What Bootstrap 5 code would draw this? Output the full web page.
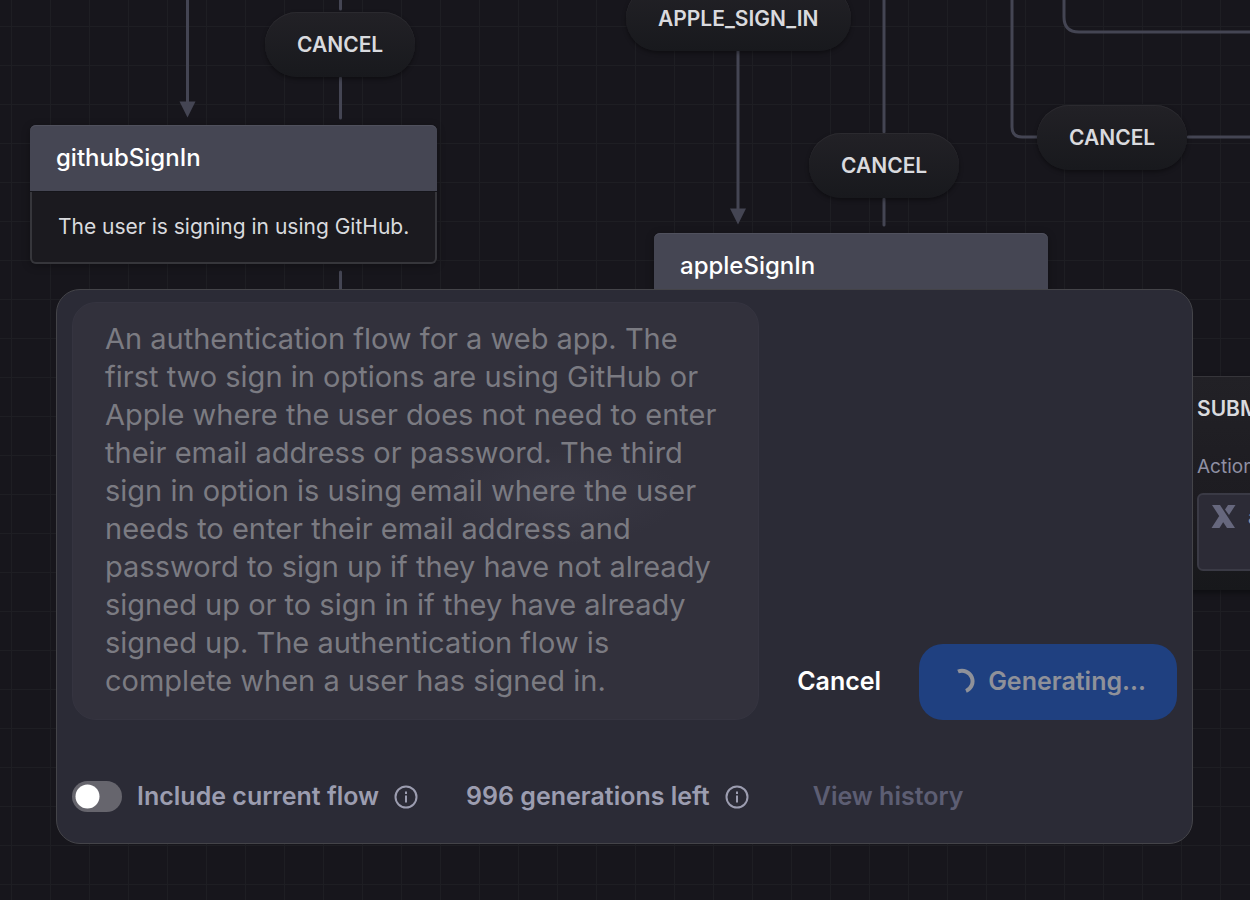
<!DOCTYPE html>
<html lang="en" data-bs-theme="dark">
<head>
<meta charset="utf-8">
<meta name="viewport" content="width=device-width, initial-scale=1">
<title>Generate flow</title>
<link href="https://cdn.jsdelivr.net/npm/bootstrap@5.3.0/dist/css/bootstrap.min.css" rel="stylesheet">
<style>
  body { font-family: Inter, "Liberation Sans", sans-serif; background: #17161c; color: #d9dade; }
  .flow-canvas {
    min-height: 100vh; padding: 289px 57px 57px 56px;
    background-color: #17161c;
    background-image: linear-gradient(to right, #1e1e23 1px, transparent 1px), linear-gradient(to bottom, #1e1e23 1px, transparent 1px);
    background-size: 39px 39px; background-position: 11px 26px;
  }
  .edges { pointer-events: none; }
  .edges .wire { fill: none; stroke: #444553; stroke-width: 3; stroke-linecap: round; }
  .edges .arrow { fill: #444553; }
  .event-pill {
    height: 65px; padding: 0 32px; border: 0; border-radius: 32px;
    background: linear-gradient(#222126, #18191d);
    box-shadow: 0 2px 4px rgba(0,0,0,.4), inset 0 1px 0 #2b2a2f;
    color: #d9dade; font-size: 21px; font-weight: 600; line-height: 24px; white-space: nowrap;
  }
  .state-node { border-radius: 6px; background: #1b1a1f; box-shadow: 0 2px 8px rgba(0,0,0,.3); }
  .state-title { height: 67px; padding: 0 26px; background: #454653; border-radius: 6px 6px 0 0; border-bottom: 1px solid #15151a; box-shadow: inset 0 1px 0 #50515d; color: #fff; font-size: 24px; font-weight: 500; }
  .state-text { height: 72px; padding: 0 26px; border: 2px solid #36363b; border-top: 0; border-radius: 0 0 6px 6px; font-size: 21px; white-space: nowrap; }
  .event-card { background: linear-gradient(#222126, #1c1b20 70%, #17181b); box-shadow: inset 0 1px 0 #36353a, 0 3px 6px rgba(0,0,0,.4); padding: 21px 0 19px 27px; }
  .event-name { font-size: 21px; font-weight: 600; line-height: 24px; }
  .event-label { font-size: 19px; line-height: 24px; color: #8f90a3; margin: 34px 0 14px; }
  .action-box { height: 78px; padding: 9px 12px; gap: 12px; background: #2c2b36; border: 2px solid #3a3a45; border-radius: 6px; color: #8f90a3; font-size: 19px; }
  .prompt-panel { background: #2b2b36; border: 1px solid #444449; border-radius: 24px; padding: 12px 15px 31px; }
  .prompt-box, .prompt-box:disabled {
    height: 418px; padding: 17px 32px; resize: none; overflow: hidden;
    background: radial-gradient(ellipse 120px 50px at 487px 192px, #393844, #32313c);
    border: 1px solid #353440; border-radius: 24px; color: #7b7b82; -webkit-text-fill-color: #7b7b82;
    font-size: 29px; line-height: 38px; opacity: 1;
  }
  .panel-btn { height: 76px; padding: 0 38px; border: 0; border-radius: 24px; font-size: 25px; font-weight: 600; }
  .panel-btn.primary, .panel-btn.primary:disabled { background: #1f4080; color: #8f9199; opacity: 1; padding: 0 31px 0 33px; }
  .panel-options { margin-top: 61px; height: 31px; font-size: 25px; font-weight: 600; color: #9c9db0; }
  .panel-options .form-check-input {
    width: 50px; height: 31px; margin: 0; border: 0; background-color: #66656d; opacity: 1;
    background-image: url("data:image/svg+xml,%3csvg xmlns='http://www.w3.org/2000/svg' viewBox='0 0 50 31'%3e%3ccircle cx='15.500' cy='15.500' r='12' fill='%23fff'/%3e%3c/svg%3e");
    background-size: 50px 31px;
  }
  .panel-options label { margin-left: 15px; }
  .info-icon { margin-left: 15px; fill: none; stroke: #9c9db0; stroke-width: 2; }
  .history-link { color: #5d5e73; }
</style>
</head>
<body>
<main class="flow-canvas position-relative overflow-hidden d-flex flex-column justify-content-end">
  <svg class="edges position-absolute top-0 start-0 w-100 h-100" aria-hidden="true">
    <path class="wire" d="M187.500 -5V104M340.500 -5V9M340.500 78V118M340.500 272V300M738 50V212M884 -5V132M884 199V225M1012 -5V127Q1012 137 1022 137H1038M1188 137H3000M1064 -5V17Q1064 32 1079 32H3000"/>
    <path class="arrow" d="M179.500 101.500h16l-8 16zM730 208.500h16l-8 16z"/>
  </svg>

  <button class="event-pill position-absolute" style="left:265px;top:12px">CANCEL</button>
  <button class="event-pill position-absolute" style="left:626px;top:-14px">APPLE_SIGN_IN</button>
  <button class="event-pill position-absolute" style="left:809px;top:133px">CANCEL</button>
  <button class="event-pill position-absolute" style="left:1037px;top:105px">CANCEL</button>

  <article class="state-node position-absolute" style="left:30px;top:125px;width:407px">
    <div class="state-title d-flex align-items-center">githubSignIn</div>
    <div class="state-text d-flex align-items-center">The user is signing in using GitHub.</div>
  </article>
  <article class="state-node position-absolute" style="left:654px;top:233px;width:394px">
    <div class="state-title d-flex align-items-center">appleSignIn</div>
  </article>
  <article class="event-card position-absolute" style="left:1170px;top:376px;width:300px">
    <div class="event-name">SUBMIT</div>
    <div class="event-label">Actions</div>
    <div class="action-box d-flex">
      <svg width="25" height="25" viewBox="-1 -1 25 25" aria-hidden="true"><path fill="#66677d" d="M0 0h8l15 23h-8zM16 0h7.500l-6.500 10-4-5.500zM-.5 23L8.500 9l4 6-5 8z"/></svg>
      <span>assign</span>
    </div>
  </article>

  <form class="prompt-panel position-relative">
    <div class="d-flex align-items-end">
      <textarea class="prompt-box form-control flex-fill w-auto" aria-label="Prompt" disabled>An authentication flow for a web app. The first two sign in options are using GitHub or Apple where the user does not need to enter their email address or password. The third sign in option is using email where the user needs to enter their email address and password to sign up if they have not already signed up or to sign in if they have already signed up. The authentication flow is complete when a user has signed in.</textarea>
      <button type="button" class="btn panel-btn text-white">Cancel</button>
      <button type="submit" class="btn panel-btn primary d-flex align-items-center gap-2" disabled>
        <svg width="28" height="28" viewBox="0 0 28 28" aria-hidden="true"><path d="M6 3.500A10 10 0 0 1 14 23" fill="none" stroke="#8f9199" stroke-width="4"/></svg>
        Generating...
      </button>
    </div>
    <div class="panel-options d-flex align-items-center">
      <div class="form-switch d-flex align-items-center p-0">
        <input class="form-check-input" type="checkbox" role="switch" id="includeFlow">
        <label for="includeFlow">Include current flow</label>
      </div>
      <svg class="info-icon" width="24" height="24" viewBox="0 0 24 24" aria-hidden="true"><circle cx="12" cy="12" r="10.500"/><path d="M12 6.500v2.500M12 10.500v7"/></svg>
      <span class="ms-5">996 generations left</span>
      <svg class="info-icon" width="24" height="24" viewBox="0 0 24 24" aria-hidden="true"><circle cx="12" cy="12" r="10.500"/><path d="M12 6.500v2.500M12 10.500v7"/></svg>
      <a href="#history" class="history-link text-decoration-none ms-5 ps-3">View history</a>
    </div>
  </form>
</main>
<script src="https://cdn.jsdelivr.net/npm/bootstrap@5.3.0/dist/js/bootstrap.bundle.min.js"></script>
</body>
</html>
